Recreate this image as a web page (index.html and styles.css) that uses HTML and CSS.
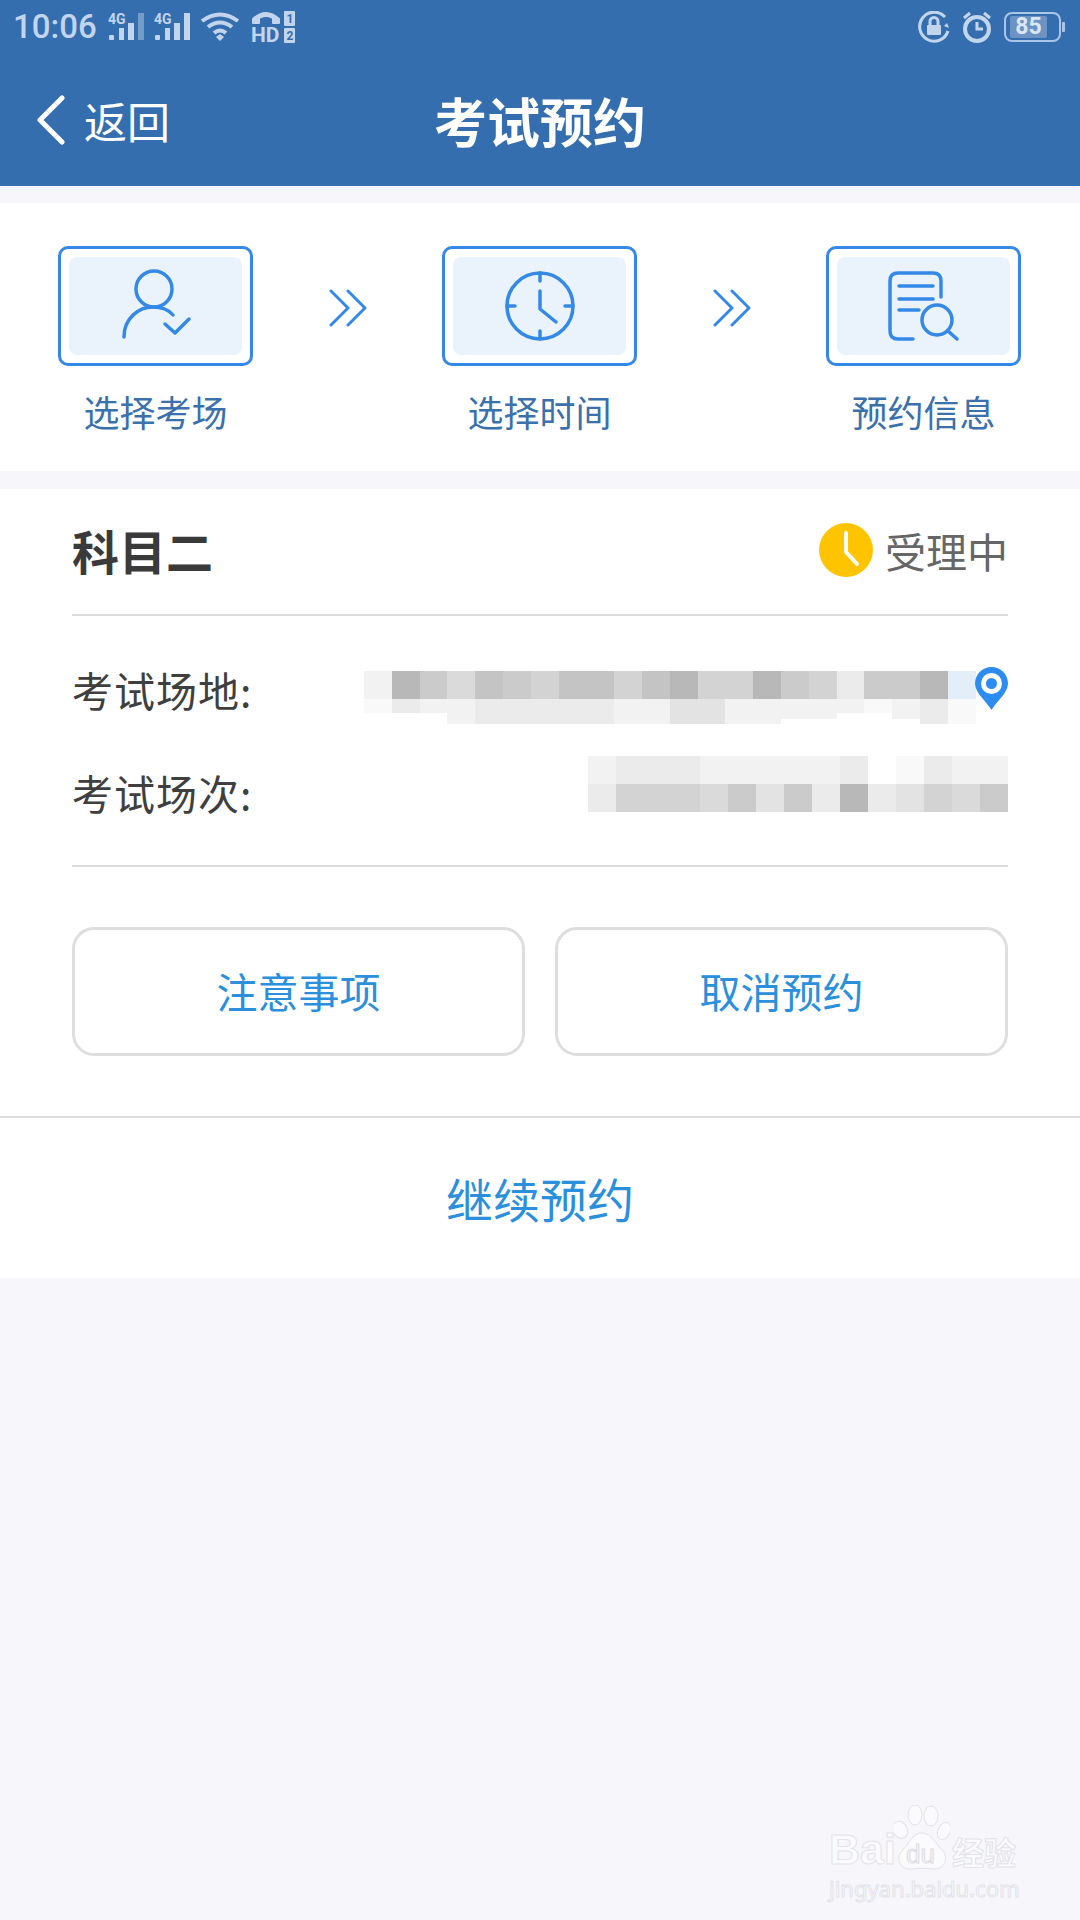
FILE: index.html
```html
<!DOCTYPE html>
<html lang="zh-CN">
<head>
<meta charset="utf-8">
<title>考试预约</title>
<link rel="stylesheet" href="styles.css">
</head>
<body>
<div class="page">
  <header class="top">
    <div class="status">
      <div class="status-left">
        <span class="time">10:06</span>
        <svg class="sig" viewBox="0 0 36 30"><text x="0" y="12" class="sig-t">4G</text><rect x="1" y="23" width="5" height="5" rx="1"/><rect x="11" y="16" width="5" height="12"/><rect x="20" y="11" width="6" height="17"/><rect x="30" y="1" width="6" height="27" class="dim"/></svg>
        <svg class="sig" viewBox="0 0 36 30"><text x="0" y="12" class="sig-t">4G</text><rect x="1" y="23" width="5" height="5" rx="1"/><rect x="11" y="16" width="5" height="12"/><rect x="20" y="11" width="6" height="17"/><rect x="30" y="1" width="6" height="27"/></svg>
        <svg class="wifi" viewBox="0 0 40 30"><path d="M2 9 Q20 -4 38 9" class="ln"/><path d="M8 15 Q20 6 32 15" class="ln"/><path d="M14 21 Q20 16 26 21" class="ln"/><path d="M16 25 L20 22 L24 25 L20 29Z"/></svg>
        <svg class="hd" viewBox="0 0 44 44"><path d="M3 10 Q15 -1 27 10" class="ln w5"/><rect x="1" y="8" width="8" height="6" rx="1"/><rect x="21" y="8" width="8" height="6" rx="1"/><text x="0" y="32" class="hd-t">HD</text><rect x="33" y="1" width="11" height="15" rx="1"/><rect x="33" y="18" width="11" height="15" rx="1"/><text x="35.500" y="13" class="num-t">1</text><text x="35.500" y="30" class="num-t">2</text></svg>
      </div>
      <div class="status-right">
        <svg class="ic32" viewBox="0 0 32 32"><path d="M27 6 A14.5 14.5 0 1 0 30 20" class="ln th"/><path d="M29 12 L31 17 L26 15Z"/><rect x="9" y="14" width="14" height="10" rx="1"/><path d="M12 14 V10.500 A4 4 0 0 1 20 10.500 V14" class="ln th"/></svg>
        <svg class="ic32" viewBox="0 0 32 32"><circle cx="16" cy="18" r="12" class="ln th2"/><path d="M16 11 V18 H22" class="ln th"/><path d="M3 7 L9 2 M29 7 L23 2" class="ln th"/></svg>
        <div class="battery"><span class="bat-fill">85</span></div><span class="bat-tip"></span>
      </div>
    </div>
    <nav class="nav">
      <a class="back">
        <svg class="chev" viewBox="0 0 30 50"><path d="M26 3 L4 25 L26 47"/></svg>
        <span>返回</span>
      </a>
      <h1 class="title">考试预约</h1>
      <span></span>
    </nav>
  </header>

  <section class="steps">
    <div class="step">
      <div class="step-box"><div class="step-inner">
        <svg class="step-ic" viewBox="0 0 80 80"><circle cx="38" cy="23" r="18"/><path d="M8 71 C8 52 23 41 37 41 C45 41 52 43 57 49"/><path d="M49 58 L59 67 L73 53"/></svg>
      </div></div>
      <div class="step-label">选择考场</div>
    </div>
    <svg class="arrows" viewBox="0 0 38 38"><path d="M2 2 L19 19 L2 36 M19 2 L36 19 L19 36"/></svg>
    <div class="step">
      <div class="step-box"><div class="step-inner">
        <svg class="step-ic" viewBox="0 0 80 80"><circle cx="40" cy="40" r="33"/><path d="M40 7 V15 M40 65 V73 M7 40 H15 M65 40 H73"/><path d="M40 25 V43 L56 56"/></svg>
      </div></div>
      <div class="step-label">选择时间</div>
    </div>
    <svg class="arrows" viewBox="0 0 38 38"><path d="M2 2 L19 19 L2 36 M19 2 L36 19 L19 36"/></svg>
    <div class="step">
      <div class="step-box"><div class="step-inner">
        <svg class="step-ic" viewBox="0 0 80 80"><path d="M57 31 V15 Q57 7 49 7 H14 Q6 7 6 15 V65 Q6 73 14 73 H29"/><path d="M15 20 H49 M15 33 H49 M15 44 H35"/><circle cx="53" cy="54" r="15"/><path d="M64 65 L73 73"/></svg>
      </div></div>
      <div class="step-label">预约信息</div>
    </div>
  </section>

  <section class="card">
    <div class="card-head">
      <h2 class="subject">科目二</h2>
      <div class="state">
        <svg class="state-ic" viewBox="0 0 54 54"><circle cx="27" cy="27" r="27" class="state-bg"/><path d="M27 10 V29 L38 41" class="state-hand"/></svg>
        <span>受理中</span>
      </div>
    </div>
    <div class="rows">
      <div class="row">
        <span class="key">考试场地:</span>
        <div class="value first">
          <div class="mosaic">
            <div class="mrow"><i class="s1"></i><i class="s8"></i><i class="s6"></i><i class="s4"></i><i class="s7"></i><i class="s6"></i><i class="s5"></i><i class="s7"></i><i class="s7"></i><i class="s5"></i><i class="s7"></i><i class="s8"></i><i class="s5"></i><i class="s5"></i><i class="s8"></i><i class="s6"></i><i class="s5"></i><i class="s2"></i><i class="s6"></i><i class="s6"></i><i class="s8"></i><i class="sb"></i></div>
            <div class="mrow"><i class="s0 sh"></i><i class="s2 sh"></i><i class="s1 sh"></i><i class="s1"></i><i class="s2"></i><i class="s2"></i><i class="s2"></i><i class="s2"></i><i class="s2"></i><i class="s1"></i><i class="s1"></i><i class="s3"></i><i class="s3"></i><i class="s1"></i><i class="s1"></i><i class="s1 md"></i><i class="s1 md"></i><i class="s1 sh"></i><i class="s0 sh"></i><i class="s1 md"></i><i class="s2"></i><i class="s0"></i></div>
          </div>
          <svg class="pin" viewBox="0 0 33 43"><path d="M16.500 43 C12 35 0 26 0 16.500 A16.500 16.500 0 0 1 33 16.500 C33 26 21 35 16.500 43Z" class="pin-bg"/><circle cx="16.500" cy="16.500" r="10.500" class="pin-ring"/><circle cx="16.500" cy="16.500" r="5.500" class="pin-bg"/></svg>
        </div>
      </div>
      <div class="row">
        <span class="key">考试场次:</span>
        <div class="value second">
          <div class="mosaic">
            <div class="mrow"><i class="s1"></i><i class="s2"></i><i class="s2"></i><i class="s2"></i><i class="s1"></i><i class="s1"></i><i class="s1"></i><i class="s1"></i><i class="s1"></i><i class="s2"></i><i class="sw"></i><i class="s0"></i><i class="s2"></i><i class="s1"></i><i class="s1"></i></div>
            <div class="mrow"><i class="s2"></i><i class="s5"></i><i class="s5"></i><i class="s5"></i><i class="s4"></i><i class="s6"></i><i class="s3"></i><i class="s6"></i><i class="s2"></i><i class="s8"></i><i class="s2"></i><i class="s3"></i><i class="s5"></i><i class="s4"></i><i class="s6"></i></div>
          </div>
        </div>
      </div>
    </div>
    <div class="actions">
      <button class="btn">注意事项</button>
      <button class="btn">取消预约</button>
    </div>
    <div class="continue">继续预约</div>
  </section>

  <div class="watermark">
    <div class="wm-top">
      <span class="wm-bai">Bai</span>
      <div class="wm-paw">
        <svg viewBox="0 0 56 66"><ellipse cx="6" cy="24" rx="7" ry="9" transform="rotate(-25 8 24)"/><ellipse cx="21" cy="10" rx="7" ry="10"/><ellipse cx="37" cy="11" rx="7" ry="10"/><ellipse cx="50" cy="26" rx="6" ry="9" transform="rotate(25 50 26)"/><path d="M28 28 C18 28 14 40 8 46 C1 54 6 65 18 64 C24 63 32 63 38 64 C50 65 55 54 49 46 C42 40 38 28 28 28Z"/></svg>
        <span class="wm-du">du</span>
      </div>
      <span class="wm-cn">经验</span>
    </div>
    <div class="wm-url">jingyan.baidu.com</div>
  </div>
</div>
</body>
</html>
```

FILE: styles.css
```css
* { box-sizing: border-box; }
html, body { margin: 0; padding: 0; }
body {
  width: 1080px;
  height: 1920px;
  overflow: hidden;
  background: #f6f6fb;
  font-family: "Noto Sans CJK SC", "Noto Sans", sans-serif;
}
.page { position: relative; width: 1080px; height: 1920px; }

/* header */
.top { height: 186px; background: #346eaf; color: #fff; }
.status {
  height: 54px;
  display: flex;
  justify-content: space-between;
  align-items: center;
  padding: 0 15px 0 13px;
  fill: #c3d5ec;
}
.status-left, .status-right { display: flex; align-items: center; }
.time { font: 500 33px/54px Roboto, sans-serif; color: #c3d5ec; width: 95px; }
.sig { width: 36px; height: 30px; margin-right: 10px; }
.sig-t { font: 700 14px Roboto, sans-serif; }
.dim { opacity: .45; }
.ln { fill: none; stroke: #c3d5ec; stroke-width: 4; }
.th { stroke-width: 3; }
.th2 { stroke-width: 4; }
.w5 { stroke-width: 5; }
.wifi { width: 40px; height: 30px; margin-right: 11px; }
.hd { width: 44px; height: 44px; margin-top: 10px; }
.hd-t { font: 700 21px Roboto, sans-serif; }
.num-t { font: 700 12px Roboto, sans-serif; fill: #346eaf; }
.ic32 { width: 32px; height: 32px; margin-right: 11px; }
.battery {
  width: 57px;
  height: 30px;
  border: 2px solid #a9c5e8;
  border-radius: 8px;
  padding: 2px 12px 2px 4px;
  display: flex;
}
.bat-fill {
  flex: 1;
  background: #6c93c4;
  border-radius: 2px;
  font: 700 23px/22px Roboto, sans-serif;
  color: #dbe6f4;
  text-align: center;
}
.bat-tip { width: 3px; height: 10px; margin-left: 1px; background: #a9c5e8; border-radius: 1px; }

.nav {
  height: 132px;
  display: grid;
  grid-template-columns: 1fr auto 1fr;
  align-items: center;
  padding: 0 36px 0 36px;
}
.back { display: flex; align-items: center; font-size: 43px; line-height: 60px; gap: 18px; }
.chev { width: 30px; height: 50px; fill: none; stroke: #fff; stroke-width: 5; stroke-linecap: round; stroke-linejoin: round; }
.title { margin: 0; font-size: 53px; line-height: 70px; font-weight: 700; }

/* steps */
.steps {
  margin-top: 17px;
  height: 268px;
  background: #fff;
  padding: 43px 59px 0 58px;
  display: flex;
  justify-content: space-between;
  align-items: flex-start;
}
.step { width: 195px; display: flex; flex-direction: column; align-items: center; }
.step-box {
  width: 195px;
  height: 120px;
  border: 3px solid #3589e6;
  border-radius: 10px;
  padding: 8px;
}
.step-inner {
  height: 100%;
  background: #eaf3fc;
  border-radius: 8px;
  display: flex;
  align-items: center;
  justify-content: center;
}
.step-ic { width: 80px; height: 80px; fill: none; stroke: #3589e6; stroke-width: 3.5; stroke-linecap: round; stroke-linejoin: round; }
.step-label { margin-top: 18px; font-size: 36px; line-height: 54px; color: #3a70ab; }
.arrows { width: 38px; height: 38px; margin-top: 43px; fill: none; stroke: #3589e6; stroke-width: 3; stroke-linecap: round; stroke-linejoin: round; }

/* card */
.card { margin-top: 18px; height: 789px; background: #fff; }
.card-head {
  margin: 0 72px;
  height: 127px;
  padding-bottom: 4px;
  border-bottom: 2px solid #dcdcdc;
  display: flex;
  justify-content: space-between;
  align-items: center;
}
.subject { margin: 0; font-size: 47px; line-height: 64px; font-weight: 700; color: #3a3a3a; }
.state { display: flex; align-items: center; gap: 12px; font-size: 41px; line-height: 56px; color: #666; }
.state-ic { width: 54px; height: 54px; }
.state-bg { fill: #ffc400; }
.state-hand { fill: none; stroke: #fff; stroke-width: 4; stroke-linecap: round; stroke-linejoin: round; }

.rows {
  margin: 0 72px;
  height: 251px;
  padding-top: 43px;
  border-bottom: 2px solid #dcdcdc;
  display: flex;
  flex-direction: column;
  gap: 43px;
}
.row { height: 60px; display: flex; justify-content: space-between; align-items: flex-start; }
.key { font-size: 41px; line-height: 60px; letter-spacing: 1px; color: #3f3f3f; }
.value { display: flex; align-items: flex-start; }
.value.first { margin-top: 8px; }
.value.second { margin-top: -6px; }
.mosaic { display: flex; flex-direction: column; }
.first .mosaic { margin-top: 4px; width: 611px; }
.mrow { display: flex; }
.mrow i { display: block; width: 28px; height: 28px; flex: none; }
.first .mrow i { width: 27.8px; }
.first .mrow + .mrow i { height: 25px; }
.first .mrow + .mrow i.sh { height: 14px; }
.first .mrow + .mrow i.md { height: 20px; }
.s0 { background: #f9f9f9; }
.s1 { background: #f2f2f2; }
.s2 { background: #ebebeb; }
.s3 { background: #e3e3e3; }
.s4 { background: #dadada; }
.s5 { background: #d3d3d3; }
.s6 { background: #cbcbcb; }
.s7 { background: #c4c4c4; }
.s8 { background: #b8b8b8; }
.sb { background: #e3eef8; }
.sw { background: #fff; }
.pin { width: 33px; height: 43px; margin-top: 0; flex: none; }
.pin-bg { fill: #2c8cf0; }
.pin-ring { fill: #fff; }

.actions { margin: 0 72px; padding-top: 60px; display: flex; gap: 30px; }
.btn {
  flex: 1;
  height: 129px;
  padding: 0 0 4px;
  background: #fff;
  border: 3px solid #dedede;
  border-radius: 22px;
  font-family: inherit;
  font-size: 41px;
  color: #2b8fdc;
}
.continue {
  margin-top: 60px;
  height: 161px;
  border-top: 2px solid #dcdcdc;
  display: flex;
  align-items: center;
  justify-content: center;
  font-size: 47px;
  color: #2b8fdc;
}

/* watermark */
.watermark {
  position: absolute;
  left: 829px;
  top: 1805px;
  width: 195px;
  color: #fbfbfd;
  -webkit-text-stroke: 1px #e3e3e8;
}
.wm-top { display: flex; align-items: flex-end; height: 66px; }
.wm-bai { font: 700 43px/40px "Liberation Sans", sans-serif; width: 65px; padding-bottom: 2px; }
.wm-paw { position: relative; width: 56px; height: 66px; flex: none; }
.wm-paw svg { width: 56px; height: 66px; fill: #fbfbfd; stroke: #e3e3e8; stroke-width: 1; }
.wm-du {
  position: absolute;
  left: 12px;
  bottom: 2px;
  font: 400 26px/30px "Liberation Sans", sans-serif;
  color: #f6f6fb;
  -webkit-text-stroke: 1px #dcdce2;
}
.wm-cn { margin-left: 2px; font-size: 32px; line-height: 40px; font-weight: 700; white-space: nowrap; }
.wm-url { margin-top: 3px; font: 400 22px/28px "Noto Sans", sans-serif; white-space: nowrap; }
```
